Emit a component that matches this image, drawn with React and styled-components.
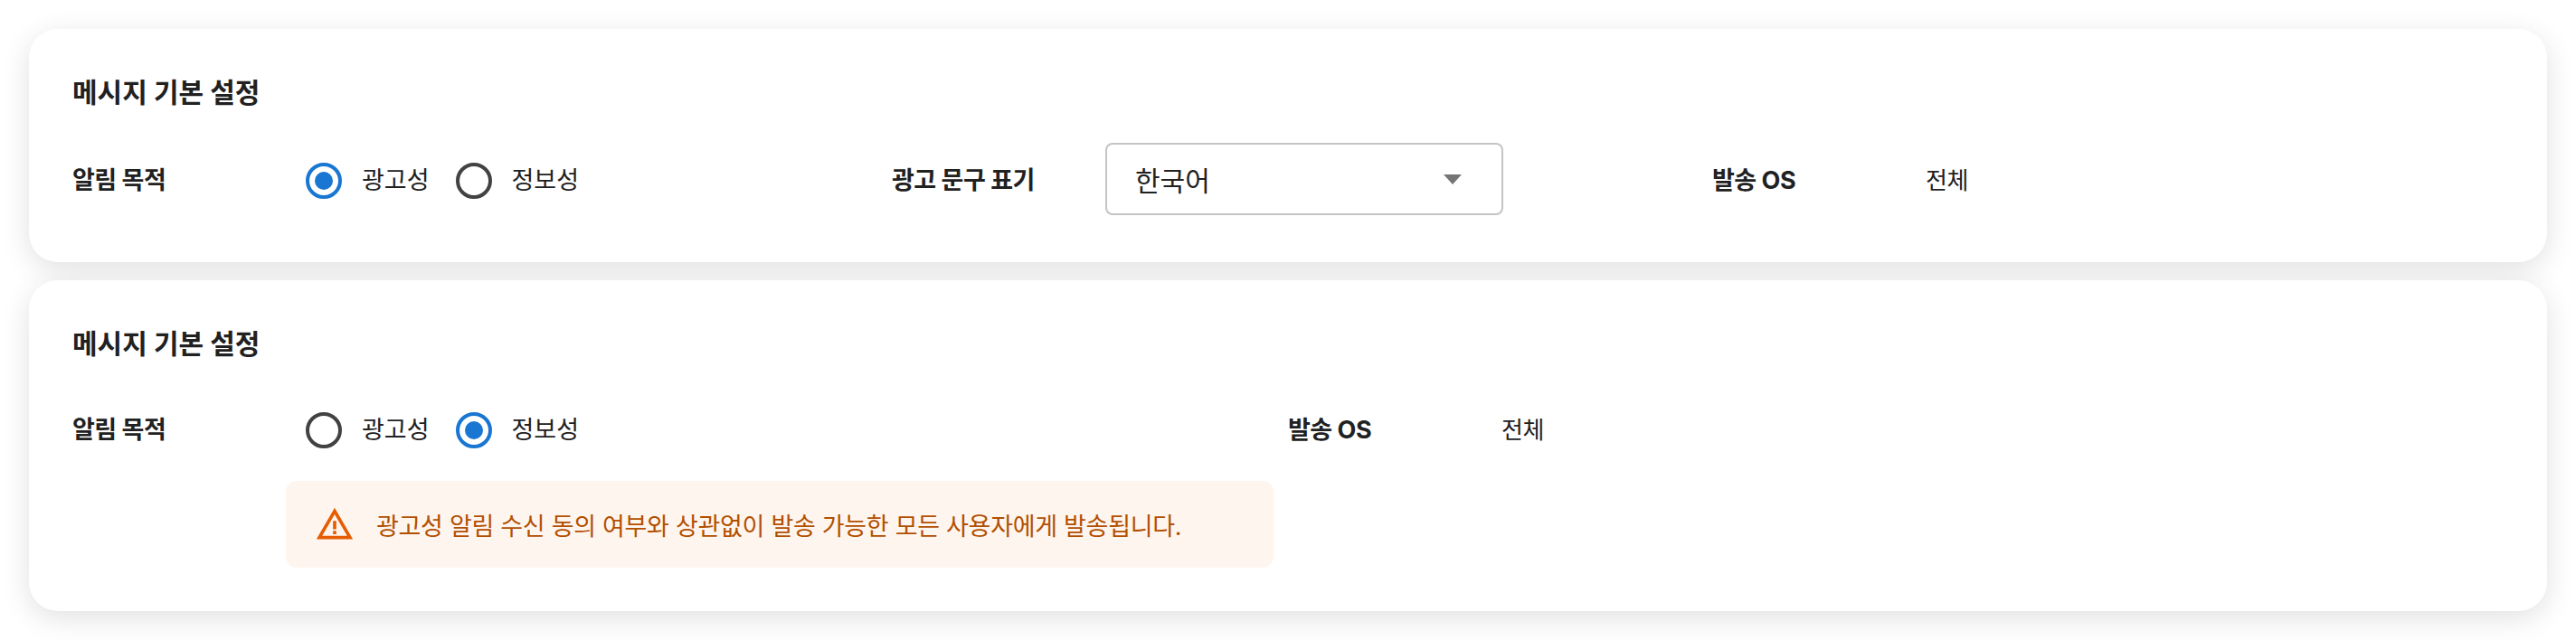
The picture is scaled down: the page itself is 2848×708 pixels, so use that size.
import styled, { createGlobalStyle } from 'styled-components';
import { MdWarningAmber } from 'react-icons/md';

const GlobalStyle = createGlobalStyle`
   html, body {
      margin: 0;
      padding: 0;
      background: #ffffff;
   }
   body {
      font-family: "Inter", "Noto Sans CJK KR", sans-serif;
      color: #212121;
   }
`;

const RadioOption = ({ label, checked }) => (
   <Radio>
      <RadioCircle $checked={checked} />
      <RadioText>{label}</RadioText>
   </Radio>
);

const PurposeRadios = ({ selected }) => (
   <RadioGroup>
      <RadioOption label="광고성" checked={selected === 'ad'} />
      <RadioOption label="정보성" checked={selected === 'info'} />
   </RadioGroup>
);

const App = () => (
   <>
      <GlobalStyle />
      <Page>
         <Card $height={258}>
            <Title>메시지 기본 설정</Title>
            <ThreeColumnRow>
               <Field>
                  <Label>알림 목적</Label>
                  <PurposeRadios selected="ad" />
               </Field>
               <Field>
                  <Label>광고 문구 표기</Label>
                  <Select>
                     <span>한국어</span>
                     <Arrow />
                  </Select>
               </Field>
               <Field>
                  <Label>발송 OS</Label>
                  <Value>전체</Value>
               </Field>
            </ThreeColumnRow>
         </Card>
         <Card $height={366}>
            <Title>메시지 기본 설정</Title>
            <TwoColumnRow>
               <div>
                  <Field>
                     <Label>알림 목적</Label>
                     <PurposeRadios selected="info" />
                  </Field>
                  <Alert>
                     <MdWarningAmber size={44} color="#e65c00" />
                     <span>광고성 알림 수신 동의 여부와 상관없이 발송 가능한 모든 사용자에게 발송됩니다.</span>
                  </Alert>
               </div>
               <Field>
                  <Label>발송 OS</Label>
                  <Value>전체</Value>
               </Field>
            </TwoColumnRow>
         </Card>
      </Page>
   </>
);

export default App;

const Page = styled.div`
   display: flex;
   flex-direction: column;
   gap: 20px;
   padding: 32px;
   height: 708px;
   box-sizing: border-box;
   overflow: hidden;
`;

const Card = styled.section`
   height: ${(p) => p.$height}px;
   box-sizing: border-box;
   padding: 48px;
   background: #ffffff;
   border-radius: 32px;
   box-shadow: 0 8px 32px rgba(0, 0, 0, 0.12);
`;

const Title = styled.h2`
   margin: 0 0 54px;
   height: 44px;
   font-size: 30px;
   line-height: 44px;
   font-weight: 700;
   color: #212121;
`;

const ThreeColumnRow = styled.div`
   display: grid;
   grid-template-columns: 906px 907px 1fr;
   padding-top: 2px;
`;

const TwoColumnRow = styled.div`
   display: grid;
   grid-template-columns: 1328px 1fr;
   column-gap: 16px;
   align-items: start;
`;

const Field = styled.div`
   display: flex;
   align-items: center;
   min-height: 40px;
`;

const Label = styled.div`
   width: 236px;
   flex: none;
   font-size: 27px;
   line-height: 40px;
   font-weight: 700;
   letter-spacing: -0.5px;
   color: #212121;
`;

const Value = styled.div`
   font-size: 26px;
   line-height: 40px;
   letter-spacing: -0.3px;
   color: #212121;
`;

const RadioGroup = styled.div`
   display: flex;
   align-items: center;
   gap: 29px;
   padding-left: 22px;
`;

const Radio = styled.label`
   display: flex;
   align-items: center;
   gap: 22px;
`;

const RadioCircle = styled.span`
   width: 40px;
   height: 40px;
   box-sizing: border-box;
   border-radius: 50%;
   border: 4px solid ${(p) => (p.$checked ? '#1976d2' : '#424242')};
   display: flex;
   align-items: center;
   justify-content: center;
   &::after {
      content: '';
      display: ${(p) => (p.$checked ? 'block' : 'none')};
      width: 20px;
      height: 20px;
      border-radius: 50%;
      background: #1976d2;
   }
`;

const RadioText = styled.span`
   font-size: 27px;
   line-height: 40px;
   color: #212121;
`;

const Select = styled.div`
   width: 440px;
   height: 80px;
   margin: -22px 0 -18px;
   box-sizing: border-box;
   padding: 0 44px 0 31px;
   display: flex;
   align-items: center;
   justify-content: space-between;
   border: 2px solid #c4c4c4;
   border-radius: 8px;
   font-size: 30px;
   color: #212121;
`;

const Arrow = styled.span`
   width: 0;
   height: 0;
   border-left: 10px solid transparent;
   border-right: 10px solid transparent;
   border-top: 11px solid #757575;
`;

const Alert = styled.div`
   display: flex;
   align-items: center;
   gap: 24px;
   width: 1092px;
   height: 96px;
   box-sizing: border-box;
   margin: 36px 0 0 236px;
   padding: 0 32px;
   background: #fff5ef;
   border-radius: 12px;
   font-size: 27px;
   letter-spacing: -0.3px;
   color: #b25000;
`;
